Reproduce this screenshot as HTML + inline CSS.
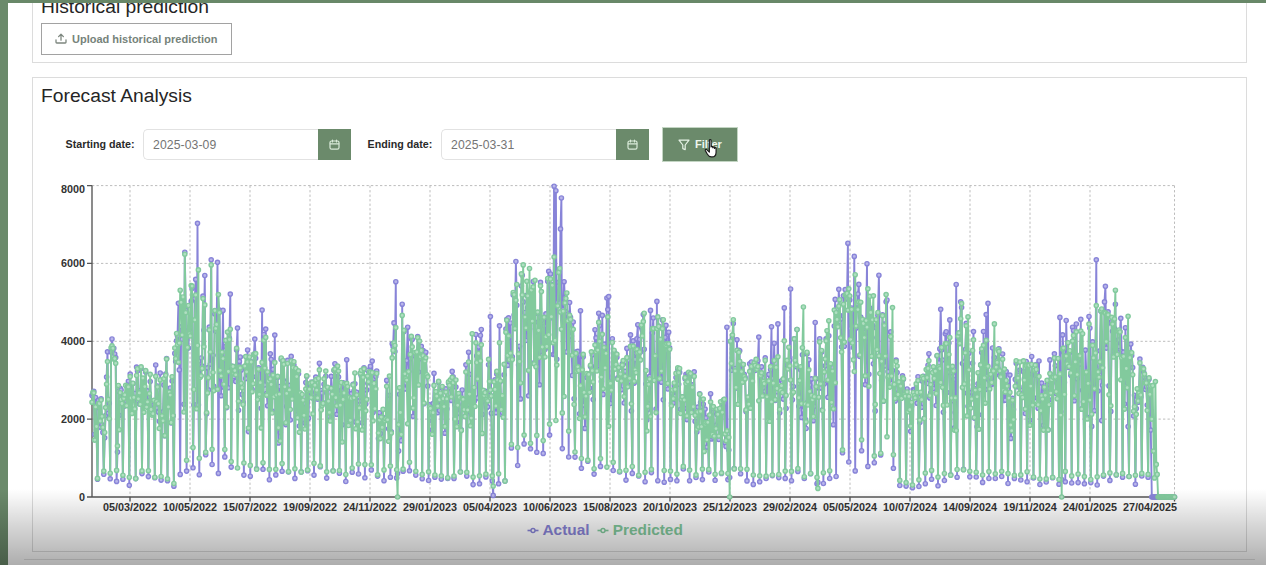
<!DOCTYPE html>
<html><head><meta charset="utf-8">
<style>
html,body{margin:0;padding:0;width:1266px;height:565px;overflow:hidden;background:#6b8a6b;font-family:"Liberation Sans",sans-serif;}
#main{position:absolute;left:8px;top:3px;width:1258px;height:562px;background:#fff;}
.abs{position:absolute;}
.card{position:absolute;border:1px solid #dcdcdc;box-sizing:border-box;background:#fff;}
.title{position:absolute;font-size:19.25px;color:#252525;white-space:nowrap;line-height:1;}
.btn-up{position:absolute;left:41px;top:23px;width:191px;height:32px;box-sizing:border-box;border:1px solid #a2a2a2;background:#fff;}
.btn-up span{position:absolute;left:30px;top:9.5px;font-size:11px;font-weight:bold;color:#76837a;white-space:nowrap;line-height:1;}
.lbl{position:absolute;font-size:10.7px;font-weight:bold;color:#2a2a2a;white-space:nowrap;line-height:1;}
.inp{position:absolute;height:31px;box-sizing:border-box;border:1px solid #e2e2e2;border-right:none;border-radius:5px 0 0 5px;background:#fff;}
.inp span{position:absolute;left:9px;top:8.6px;font-size:12.2px;color:#747474;letter-spacing:0.1px;white-space:nowrap;line-height:1;}
.cal{position:absolute;height:31px;background:#6b8a6b;}
.filter{position:absolute;left:662px;top:127px;width:76px;height:35px;box-sizing:border-box;background:#6b8a6b;border:1.5px solid #c3d5c3;}
#overlay{position:absolute;left:0;top:0;width:1266px;height:565px;pointer-events:none;
 background:linear-gradient(to bottom,rgba(0,0,0,0) 0px,rgba(0,0,0,0) 489px,rgba(0,0,0,0.045) 499px,rgba(0,0,0,0.105) 513px,rgba(0,0,0,0.18) 530px,rgba(0,0,0,0.25) 548px,rgba(0,0,0,0.32) 565px);}
</style></head><body>
<div id="wrap" style="position:absolute;left:0;top:0;width:1266px;height:565px;">
<div id="main"></div>
<!-- card 1 -->
<div class="card" style="left:32px;top:-10px;width:1215px;height:73px;"></div>
<div class="title" style="left:41px;top:-3px;">Historical prediction</div>
<div class="btn-up">
<svg class="abs" style="left:13px;top:9px" width="12" height="11" viewBox="0 0 12 11"><path d="M6 7.2V1.4M3.6 3.6L6 1.2L8.4 3.6M1 6.8V9.2Q1 10 1.8 10H10.2Q11 10 11 9.2V6.8" fill="none" stroke="#7d877f" stroke-width="1.3" stroke-linecap="round" stroke-linejoin="round"/></svg>
<span>Upload historical prediction</span></div>
<!-- card 2 -->
<div class="card" style="left:32px;top:77px;width:1215px;height:475px;"></div>
<div class="title" style="left:41px;top:86px;">Forecast Analysis</div>
<div class="lbl" style="left:65.6px;top:139.4px;">Starting date:</div>
<div class="inp" style="left:143px;top:129px;width:175px;"><span>2025-03-09</span></div>
<div class="cal" style="left:318px;top:129px;width:33px;"><svg class="abs" style="left:11px;top:10px" width="11" height="11" viewBox="0 0 11 11"><rect x="1" y="2" width="9" height="8.2" rx="1.6" fill="none" stroke="#d9ead9" stroke-width="1.2"/><path d="M1.2 4.8H9.8M3.5 1V3M7.5 1V3" stroke="#d9ead9" stroke-width="1.2" stroke-linecap="round"/></svg></div>
<div class="lbl" style="left:367.6px;top:139.4px;">Ending date:</div>
<div class="inp" style="left:441px;top:129px;width:175px;"><span>2025-03-31</span></div>
<div class="cal" style="left:616px;top:129px;width:33px;"><svg class="abs" style="left:11px;top:10px" width="11" height="11" viewBox="0 0 11 11"><rect x="1" y="2" width="9" height="8.2" rx="1.6" fill="none" stroke="#d9ead9" stroke-width="1.2"/><path d="M1.2 4.8H9.8M3.5 1V3M7.5 1V3" stroke="#d9ead9" stroke-width="1.2" stroke-linecap="round"/></svg></div>
<div class="filter"><svg class="abs" style="left:15px;top:10.5px" width="12" height="12" viewBox="0 0 12 12"><path d="M1 1.2H11L7.2 6V10.6L4.8 9.6V6Z" fill="none" stroke="#e6f2e6" stroke-width="1.2" stroke-linejoin="round"/></svg><span style="position:absolute;left:32px;top:10.5px;font-size:11px;font-weight:bold;color:#eef6ee;line-height:1;white-space:nowrap;">Filter</span>
<svg class="abs" style="left:40.5px;top:9.5px" width="17" height="21" viewBox="0 0 16 20"><path d="M5 2.2C5 1.3 6.6 1.3 6.6 2.2V8.5C6.6 7.6 8.2 7.6 8.2 8.5V9.2C8.2 8.3 9.8 8.3 9.8 9.2V9.9C9.8 9 11.4 9 11.4 9.9V13.5C11.4 16 10 18 7.6 18H6.8C5 18 3.8 16.6 3 15.2L1.2 12C0.8 11.2 1.8 10.4 2.5 11.1L5 13.4Z" fill="#fff" stroke="#1a1a1a" stroke-width="1.1" stroke-linejoin="round"/></svg></div>
<svg class="abs" style="left:0;top:0" width="1266" height="565" viewBox="0 0 1266 565">
<defs><marker id="ma" markerUnits="userSpaceOnUse" markerWidth="8" markerHeight="8" refX="4" refY="4" viewBox="0 0 8 8"><circle cx="4" cy="4" r="2.1" fill="#b9b6ea" stroke="#8884d8" stroke-width="1.4"/></marker><marker id="mp" markerUnits="userSpaceOnUse" markerWidth="8" markerHeight="8" refX="4" refY="4" viewBox="0 0 8 8"><circle cx="4" cy="4" r="2.1" fill="#b0dfc2" stroke="#82ca9d" stroke-width="1.4"/></marker></defs>
<path d="M92,185.6H1174.5M92,263.4H1174.5M92,341.3H1174.5M92,419.1H1174.5M130,185.6V497M190,185.6V497M250,185.6V497M310,185.6V497M370,185.6V497M430,185.6V497M490,185.6V497M550,185.6V497M610,185.6V497M670,185.6V497M730,185.6V497M790,185.6V497M850,185.6V497M910,185.6V497M970,185.6V497M1030,185.6V497M1090,185.6V497M1174.5,185.6V497" stroke="#bcbcbc" stroke-width="1" stroke-dasharray="2.3 2.2" fill="none"/>
<path d="M92,185.6V497M92,497H1174.5M87,497.0H92M87,419.1H92M87,341.3H92M87,263.4H92M87,185.6H92M130,497V501.5M190,497V501.5M250,497V501.5M310,497V501.5M370,497V501.5M430,497V501.5M490,497V501.5M550,497V501.5M610,497V501.5M670,497V501.5M730,497V501.5M790,497V501.5M850,497V501.5M910,497V501.5M970,497V501.5M1030,497V501.5M1090,497V501.5M1174.5,497V501.5" stroke="#555" stroke-width="1.35" fill="none"/>
<path d="M92.0,395.4L92.9,393.7L93.8,391.3L94.7,434.4L95.6,397.5L96.5,429.8L97.5,479.2L98.4,400.4L99.3,408.1L100.2,427.1L101.1,398.8L102.0,424.7L102.9,432.4L103.8,474.3L104.7,437.8L105.6,415.6L106.6,377.1L107.5,351.8L108.4,413.2L109.3,403.2L110.2,478.8L111.1,352.1L112.0,339.0L112.9,349.2L113.8,348.3L114.7,354.0L115.7,357.6L116.6,481.4L117.5,452.1L118.4,391.2L119.3,415.3L120.2,388.4L121.1,390.0L122.0,402.8L122.9,479.2L123.8,406.5L124.7,396.9L125.7,399.3L126.6,401.2L127.5,388.3L128.4,381.2L129.3,485.3L130.2,374.1L131.1,393.3L132.0,410.3L132.9,383.6L133.8,395.5L134.8,393.5L135.7,478.6L136.6,367.1L137.5,371.0L138.4,390.5L139.3,403.8L140.2,398.7L141.1,368.5L142.0,473.6L142.9,379.0L143.9,405.7L144.8,389.1L145.7,372.1L146.6,401.3L147.5,390.9L148.4,476.6L149.3,396.8L150.2,381.6L151.1,408.9L152.0,403.2L152.9,409.0L153.9,404.8L154.8,477.8L155.7,365.0L156.6,407.8L157.5,386.0L158.4,412.1L159.3,421.2L160.2,373.0L161.1,480.1L162.0,413.3L163.0,411.8L163.9,384.9L164.8,435.7L165.7,374.1L166.6,358.6L167.5,480.8L168.4,396.8L169.3,396.4L170.2,388.0L171.1,423.0L172.1,381.0L173.0,415.9L173.9,486.2L174.8,353.4L175.7,361.4L176.6,340.8L177.5,336.0L178.4,303.3L179.3,369.9L180.2,474.4L181.1,326.8L182.1,339.3L183.0,298.8L183.9,404.2L184.8,252.2L185.7,310.1L186.6,471.1L187.5,347.9L188.4,348.0L189.3,329.3L190.2,327.5L191.2,301.3L192.1,288.5L193.0,467.8L193.9,405.0L194.8,298.6L195.7,279.4L196.6,404.7L197.5,223.3L198.4,404.9L199.3,474.7L200.2,364.8L201.2,358.0L202.1,366.0L203.0,296.1L203.9,330.2L204.8,275.5L205.7,454.8L206.6,413.7L207.5,367.9L208.4,389.9L209.3,327.1L210.3,364.2L211.2,259.8L212.1,464.5L213.0,355.3L213.9,386.4L214.8,314.0L215.7,331.2L216.6,324.4L217.5,262.3L218.4,473.4L219.4,310.1L220.3,352.0L221.2,395.8L222.1,361.3L223.0,310.4L223.9,387.2L224.8,456.9L225.7,346.4L226.6,407.6L227.5,346.0L228.4,387.8L229.4,338.4L230.3,294.1L231.2,467.1L232.1,366.2L233.0,379.0L233.9,376.8L234.8,366.6L235.7,381.5L236.6,349.9L237.5,328.1L238.5,410.2L239.4,361.4L240.3,357.0L241.2,369.9L242.1,394.4L243.0,402.2L243.9,475.1L244.8,366.8L245.7,378.6L246.6,365.4L247.6,350.0L248.5,431.6L249.4,367.1L250.3,476.2L251.2,361.8L252.1,389.2L253.0,376.8L253.9,354.2L254.8,339.1L255.7,358.3L256.6,468.7L257.6,391.3L258.5,367.8L259.4,370.2L260.3,369.9L261.2,408.3L262.1,310.1L263.0,469.3L263.9,334.5L264.8,385.0L265.7,329.1L266.7,393.2L267.6,405.7L268.5,389.7L269.4,479.7L270.3,353.8L271.2,359.3L272.1,411.0L273.0,369.4L273.9,388.0L274.8,335.1L275.8,474.9L276.7,391.6L277.6,377.5L278.5,442.9L279.4,386.5L280.3,432.6L281.2,359.5L282.1,471.2L283.0,360.7L283.9,380.8L284.8,382.3L285.8,424.6L286.7,406.4L287.6,360.4L288.5,472.0L289.4,385.4L290.3,420.0L291.2,356.4L292.1,394.9L293.0,367.1L293.9,365.0L294.9,478.4L295.8,371.8L296.7,375.2L297.6,414.5L298.5,373.7L299.4,426.0L300.3,406.1L301.2,471.9L302.1,400.0L303.0,407.2L304.0,415.2L304.9,422.9L305.8,382.6L306.7,376.5L307.6,470.7L308.5,418.3L309.4,384.7L310.3,385.3L311.2,392.3L312.1,382.1L313.0,397.9L314.0,475.1L314.9,398.5L315.8,377.1L316.7,392.7L317.6,399.1L318.5,390.9L319.4,363.2L320.3,466.7L321.2,390.5L322.1,393.1L323.1,402.7L324.0,384.3L324.9,388.1L325.8,376.2L326.7,478.1L327.6,389.3L328.5,415.4L329.4,416.6L330.3,410.7L331.2,376.3L332.2,393.4L333.1,470.7L334.0,370.5L334.9,363.7L335.8,395.8L336.7,414.3L337.6,376.3L338.5,377.1L339.4,473.3L340.3,398.6L341.2,390.4L342.2,424.7L343.1,382.7L344.0,393.2L344.9,400.7L345.8,481.5L346.7,359.7L347.6,390.4L348.5,423.2L349.4,398.9L350.3,424.7L351.3,393.6L352.2,472.2L353.1,384.4L354.0,390.7L354.9,383.7L355.8,421.9L356.7,392.2L357.6,418.1L358.5,474.0L359.4,400.9L360.4,373.4L361.3,376.0L362.2,422.7L363.1,383.5L364.0,367.8L364.9,477.8L365.8,403.9L366.7,389.9L367.6,370.2L368.5,382.7L369.4,379.3L370.4,366.4L371.3,469.9L372.2,361.1L373.1,412.4L374.0,378.6L374.9,409.5L375.8,376.6L376.7,371.0L377.6,476.1L378.5,438.6L379.5,412.7L380.4,433.6L381.3,416.5L382.2,427.1L383.1,417.5L384.0,480.7L384.9,419.4L385.8,418.9L386.7,380.4L387.6,420.0L388.6,428.7L389.5,395.3L390.4,477.2L391.3,431.8L392.2,343.7L393.1,346.5L394.0,322.9L394.9,351.6L395.8,281.7L396.7,477.9L397.6,473.6L398.6,450.9L399.5,394.3L400.4,422.2L401.3,440.7L402.2,304.2L403.1,471.2L404.0,331.4L404.9,388.9L405.8,383.0L406.7,360.6L407.7,327.2L408.6,371.6L409.5,470.8L410.4,358.7L411.3,338.6L412.2,339.5L413.1,416.3L414.0,407.4L414.9,356.0L415.8,475.1L416.8,363.4L417.7,336.5L418.6,372.0L419.5,348.0L420.4,358.6L421.3,346.3L422.2,478.7L423.1,350.6L424.0,403.7L424.9,353.9L425.8,352.2L426.8,375.6L427.7,386.1L428.6,480.5L429.5,404.8L430.4,419.9L431.3,417.9L432.2,429.7L433.1,403.6L434.0,373.3L434.9,477.2L435.9,396.6L436.8,392.5L437.7,412.6L438.6,382.3L439.5,410.5L440.4,400.6L441.3,479.1L442.2,388.2L443.1,401.0L444.0,406.3L444.9,433.2L445.9,388.9L446.8,408.9L447.7,478.5L448.6,382.9L449.5,384.4L450.4,387.9L451.3,400.4L452.2,371.4L453.1,376.9L454.0,478.4L455.0,404.8L455.9,387.1L456.8,422.3L457.7,413.3L458.6,395.8L459.5,397.0L460.4,471.7L461.3,429.9L462.2,390.0L463.1,404.6L464.1,404.1L465.0,416.4L465.9,364.8L466.8,476.1L467.7,404.8L468.6,352.2L469.5,374.2L470.4,412.3L471.3,415.2L472.2,401.2L473.1,484.6L474.1,401.8L475.0,399.7L475.9,334.5L476.8,355.9L477.7,397.9L478.6,347.0L479.5,483.8L480.4,335.5L481.3,329.5L482.2,414.4L483.2,400.8L484.1,398.9L485.0,391.1L485.9,476.9L486.8,407.4L487.7,406.8L488.6,364.8L489.5,391.2L490.4,316.6L491.3,413.3L492.3,480.9L493.2,495.4L494.1,395.9L495.0,379.9L495.9,412.8L496.8,374.1L497.7,390.1L498.6,483.8L499.5,325.8L500.4,381.6L501.3,414.3L502.3,412.5L503.2,402.2L504.1,374.8L505.0,480.9L505.9,329.1L506.8,319.3L507.7,365.4L508.6,317.8L509.5,361.0L510.4,323.0L511.4,447.9L512.3,356.7L513.2,295.0L514.1,315.1L515.0,313.4L515.9,261.5L516.8,305.2L517.7,465.5L518.6,365.0L519.5,346.2L520.5,398.9L521.4,286.0L522.3,275.2L523.2,301.9L524.1,443.9L525.0,312.5L525.9,340.5L526.8,295.2L527.7,307.7L528.6,395.8L529.5,329.0L530.5,448.8L531.4,301.6L532.3,313.8L533.2,281.5L534.1,362.9L535.0,322.1L535.9,363.3L536.8,452.3L537.7,313.3L538.6,332.9L539.6,384.8L540.5,282.3L541.4,320.7L542.3,355.3L543.2,453.4L544.1,326.0L545.0,349.5L545.9,313.9L546.8,346.7L547.7,281.3L548.7,271.3L549.6,435.1L550.5,274.0L551.4,317.8L552.3,284.9L553.2,354.5L554.1,186.2L555.0,354.6L555.9,190.7L556.8,359.3L557.7,302.5L558.7,282.3L559.6,303.2L560.5,228.9L561.4,198.0L562.3,448.6L563.2,309.6L564.1,281.7L565.0,301.8L565.9,311.9L566.8,351.9L567.8,314.0L568.7,457.0L569.6,302.5L570.5,317.4L571.4,336.1L572.3,375.5L573.2,322.0L574.1,398.8L575.0,457.1L575.9,352.1L576.9,367.4L577.8,351.4L578.7,367.4L579.6,413.7L580.5,310.7L581.4,468.3L582.3,387.7L583.2,356.8L584.1,405.1L585.0,428.4L585.9,399.5L586.9,377.4L587.8,461.2L588.7,374.0L589.6,388.1L590.5,366.6L591.4,366.2L592.3,354.8L593.2,399.6L594.1,474.1L595.0,329.7L596.0,337.9L596.9,369.5L597.8,369.8L598.7,313.2L599.6,325.6L600.5,466.4L601.4,381.6L602.3,315.4L603.2,394.4L604.1,344.1L605.1,363.3L606.0,360.9L606.9,298.0L607.8,309.6L608.7,296.6L609.6,394.2L610.5,403.5L611.4,387.3L612.3,338.7L613.2,470.5L614.1,352.1L615.1,366.6L616.0,354.1L616.9,357.3L617.8,377.8L618.7,367.9L619.6,472.0L620.5,375.6L621.4,389.7L622.3,363.8L623.2,364.3L624.2,403.0L625.1,371.3L626.0,480.1L626.9,348.4L627.8,384.8L628.7,360.1L629.6,381.3L630.5,334.9L631.4,410.9L632.3,473.4L633.2,340.9L634.2,383.1L635.1,359.5L636.0,353.2L636.9,338.9L637.8,324.7L638.7,475.9L639.6,339.5L640.5,352.1L641.4,327.5L642.3,330.1L643.3,314.6L644.2,349.2L645.1,481.7L646.0,384.0L646.9,420.0L647.8,409.4L648.7,403.8L649.6,376.4L650.5,310.4L651.4,472.6L652.4,333.0L653.3,318.0L654.2,360.5L655.1,355.7L656.0,409.1L656.9,301.4L657.8,480.7L658.7,326.1L659.6,379.2L660.5,360.7L661.4,382.2L662.4,319.9L663.3,399.8L664.2,482.2L665.1,337.4L666.0,325.4L666.9,350.3L667.8,389.0L668.7,332.2L669.6,347.9L670.5,479.4L671.5,403.3L672.4,393.4L673.3,403.1L674.2,385.7L675.1,396.2L676.0,377.5L676.9,480.8L677.8,369.2L678.7,384.2L679.6,372.4L680.6,409.2L681.5,399.7L682.4,396.8L683.3,469.0L684.2,408.4L685.1,378.7L686.0,374.2L686.9,419.6L687.8,374.4L688.7,373.7L689.6,480.7L690.6,375.6L691.5,410.9L692.4,384.9L693.3,403.6L694.2,371.8L695.1,421.3L696.0,477.5L696.9,432.0L697.8,407.1L698.7,427.4L699.7,393.7L700.6,402.5L701.5,406.4L702.4,479.6L703.3,404.2L704.2,447.7L705.1,409.1L706.0,417.8L706.9,447.1L707.8,428.8L708.8,472.0L709.7,424.0L710.6,393.7L711.5,438.9L712.4,437.0L713.3,412.2L714.2,434.4L715.1,480.3L716.0,425.3L716.9,414.5L717.8,410.0L718.8,439.5L719.7,410.8L720.6,413.5L721.5,473.4L722.4,410.0L723.3,406.4L724.2,399.5L725.1,443.0L726.0,446.4L726.9,327.2L727.9,479.6L728.8,450.1L729.7,477.5L730.6,341.5L731.5,370.3L732.4,337.9L733.3,323.5L734.2,468.5L735.1,368.5L736.0,388.1L737.0,339.7L737.9,383.9L738.8,350.3L739.7,350.7L740.6,473.7L741.5,364.2L742.4,373.0L743.3,364.6L744.2,374.3L745.1,377.4L746.0,411.4L747.0,480.9L747.9,402.2L748.8,401.3L749.7,363.8L750.6,402.8L751.5,362.0L752.4,382.6L753.3,484.4L754.2,367.3L755.1,370.5L756.1,361.4L757.0,362.4L757.9,360.7L758.8,337.1L759.7,481.8L760.6,376.5L761.5,366.8L762.4,394.3L763.3,387.8L764.2,377.9L765.2,357.9L766.1,478.5L767.0,381.7L767.9,415.6L768.8,374.4L769.7,406.6L770.6,369.6L771.5,326.7L772.4,475.6L773.3,378.4L774.2,343.2L775.2,400.5L776.1,376.2L777.0,391.8L777.9,323.9L778.8,477.6L779.7,412.8L780.6,387.1L781.5,380.7L782.4,382.8L783.3,399.1L784.3,307.9L785.2,478.4L786.1,408.5L787.0,368.0L787.9,364.5L788.8,362.7L789.7,360.3L790.6,289.0L791.5,480.7L792.4,399.7L793.4,386.5L794.3,338.8L795.2,357.5L796.1,366.6L797.0,329.6L797.9,471.4L798.8,406.3L799.7,387.2L800.6,369.8L801.5,417.4L802.4,354.8L803.4,410.3L804.3,478.5L805.2,419.3L806.1,428.5L807.0,354.0L807.9,402.0L808.8,359.8L809.7,385.1L810.6,473.8L811.5,378.9L812.5,402.7L813.4,420.7L814.3,406.3L815.2,322.5L816.1,378.8L817.0,483.7L817.9,482.2L818.8,387.9L819.7,338.7L820.6,387.9L821.6,352.1L822.5,409.8L823.4,483.5L824.3,383.8L825.2,365.8L826.1,338.9L827.0,338.8L827.9,397.3L828.8,335.7L829.7,478.5L830.6,373.2L831.6,406.0L832.5,367.7L833.4,424.7L834.3,326.1L835.2,299.4L836.1,476.5L837.0,308.7L837.9,325.1L838.8,289.3L839.7,315.2L840.7,319.1L841.6,347.0L842.5,452.8L843.4,295.8L844.3,346.3L845.2,289.6L846.1,298.9L847.0,298.4L847.9,243.2L848.8,462.0L849.8,300.1L850.7,328.6L851.6,308.0L852.5,341.2L853.4,347.6L854.3,256.4L855.2,470.9L856.1,328.1L857.0,304.1L857.9,294.0L858.8,284.4L859.8,356.5L860.7,317.1L861.6,450.7L862.5,325.9L863.4,329.6L864.3,332.4L865.2,384.6L866.1,325.1L867.0,263.7L867.9,466.4L868.9,374.2L869.8,308.0L870.7,318.0L871.6,338.4L872.5,325.4L873.4,363.7L874.3,462.7L875.2,410.9L876.1,327.8L877.0,337.5L877.9,315.4L878.9,275.2L879.8,356.4L880.7,454.9L881.6,380.4L882.5,314.9L883.4,401.2L884.3,324.1L885.2,365.9L886.1,301.7L887.0,300.0L888.0,371.6L888.9,377.6L889.8,380.0L890.7,331.9L891.6,374.8L892.5,370.2L893.4,468.3L894.3,384.4L895.2,400.9L896.1,360.1L897.1,372.6L898.0,398.2L898.9,392.1L899.8,485.5L900.7,392.6L901.6,392.7L902.5,375.9L903.4,379.2L904.3,390.4L905.2,395.7L906.1,486.1L907.1,389.0L908.0,404.7L908.9,397.8L909.8,410.4L910.7,431.3L911.6,406.2L912.5,487.7L913.4,389.6L914.3,389.8L915.2,396.3L916.2,388.2L917.1,403.2L918.0,376.7L918.9,486.5L919.8,422.5L920.7,393.8L921.6,407.3L922.5,381.2L923.4,376.3L924.3,418.3L925.3,483.7L926.2,377.1L927.1,383.5L928.0,365.2L928.9,353.7L929.8,397.9L930.7,393.1L931.6,479.2L932.5,386.1L933.4,388.5L934.3,368.7L935.3,370.4L936.2,405.5L937.1,356.0L938.0,485.8L938.9,362.9L939.8,348.9L940.7,309.3L941.6,350.1L942.5,360.0L943.4,412.2L944.4,480.5L945.3,333.7L946.2,331.7L947.1,392.5L948.0,372.2L948.9,343.1L949.8,319.9L950.7,474.8L951.6,400.8L952.5,373.0L953.5,379.5L954.4,427.9L955.3,412.6L956.2,284.5L957.1,477.2L958.0,342.2L958.9,333.2L959.8,343.6L960.7,301.8L961.6,307.5L962.5,363.6L963.5,469.4L964.4,362.0L965.3,349.5L966.2,323.3L967.1,393.1L968.0,406.2L968.9,353.3L969.8,476.8L970.7,397.0L971.6,392.3L972.6,363.2L973.5,331.6L974.4,418.1L975.3,388.8L976.2,477.0L977.1,426.7L978.0,383.8L978.9,414.7L979.8,382.0L980.7,364.9L981.7,352.6L982.6,482.4L983.5,331.5L984.4,379.7L985.3,389.4L986.2,314.6L987.1,376.2L988.0,303.3L988.9,478.5L989.8,381.1L990.7,382.4L991.7,384.4L992.6,348.0L993.5,383.2L994.4,357.6L995.3,478.5L996.2,374.1L997.1,372.6L998.0,368.7L998.9,348.7L999.8,375.6L1000.8,372.2L1001.7,476.5L1002.6,354.0L1003.5,400.4L1004.4,384.6L1005.3,400.2L1006.2,371.5L1007.1,384.9L1008.0,483.5L1008.9,405.3L1009.9,375.1L1010.8,438.4L1011.7,423.4L1012.6,398.3L1013.5,409.4L1014.4,478.4L1015.3,379.4L1016.2,363.3L1017.1,386.7L1018.0,375.2L1018.9,386.5L1019.9,370.1L1020.8,480.0L1021.7,390.2L1022.6,393.9L1023.5,371.7L1024.4,378.9L1025.3,413.5L1026.2,361.5L1027.1,481.8L1028.0,375.1L1029.0,374.0L1029.9,420.3L1030.8,400.4L1031.7,356.5L1032.6,399.3L1033.5,478.0L1034.4,370.7L1035.3,375.2L1036.2,364.5L1037.1,397.9L1038.1,408.2L1039.0,361.0L1039.9,484.5L1040.8,405.6L1041.7,383.1L1042.6,411.6L1043.5,425.4L1044.4,388.9L1045.3,397.0L1046.2,482.0L1047.1,384.7L1048.1,429.8L1049.0,399.7L1049.9,359.9L1050.8,391.0L1051.7,382.3L1052.6,477.8L1053.5,375.0L1054.4,353.8L1055.3,365.7L1056.2,393.5L1057.2,383.5L1058.1,382.6L1059.0,484.2L1059.9,317.4L1060.8,411.8L1061.7,479.5L1062.6,334.9L1063.5,352.2L1064.4,382.4L1065.3,481.8L1066.2,320.5L1067.2,361.6L1068.1,352.8L1069.0,367.4L1069.9,352.3L1070.8,375.2L1071.7,483.0L1072.6,327.2L1073.5,330.6L1074.4,400.8L1075.3,361.3L1076.3,324.0L1077.2,378.8L1078.1,482.6L1079.0,358.8L1079.9,364.1L1080.8,319.3L1081.7,408.9L1082.6,390.3L1083.5,402.1L1084.4,483.8L1085.4,350.1L1086.3,373.3L1087.2,417.4L1088.1,391.2L1089.0,316.5L1089.9,328.1L1090.8,482.6L1091.7,426.4L1092.6,341.8L1093.5,358.3L1094.4,410.7L1095.4,366.4L1096.3,259.8L1097.2,485.0L1098.1,391.0L1099.0,371.4L1099.9,350.8L1100.8,311.1L1101.7,420.6L1102.6,385.3L1103.5,476.1L1104.5,301.9L1105.4,286.3L1106.3,348.1L1107.2,324.3L1108.1,311.8L1109.0,385.9L1109.9,480.4L1110.8,411.4L1111.7,321.3L1112.6,331.2L1113.6,354.7L1114.5,328.5L1115.4,304.2L1116.3,474.9L1117.2,351.9L1118.1,340.0L1119.0,346.7L1119.9,331.5L1120.8,318.3L1121.7,351.5L1122.6,477.2L1123.6,352.2L1124.5,404.0L1125.4,327.7L1126.3,361.7L1127.2,382.8L1128.1,426.6L1129.0,476.5L1129.9,358.1L1130.8,344.1L1131.7,355.6L1132.7,367.6L1133.6,416.0L1134.5,395.2L1135.4,484.2L1136.3,408.6L1137.2,396.4L1138.1,402.3L1139.0,393.0L1139.9,359.1L1140.8,397.1L1141.8,476.0L1142.7,367.4L1143.6,371.8L1144.5,377.3L1145.4,389.5L1146.3,386.6L1147.2,405.1L1148.1,477.3L1149.0,379.3L1149.9,392.2L1150.8,430.1L1151.8,497.0L1152.7,497.0L1153.6,497.0L1154.5,497.0L1155.4,497.0L1156.3,497.0L1157.2,497.0L1158.1,497.0L1159.0,497.0L1159.9,497.0L1160.9,497.0L1161.8,497.0L1162.7,497.0L1163.6,497.0L1164.5,497.0L1165.4,497.0L1166.3,497.0L1167.2,497.0L1168.1,497.0L1169.0,497.0L1170.0,497.0L1170.9,497.0L1171.8,497.0L1172.7,497.0L1173.6,497.0L1174.5,497.0" fill="none" stroke="#8884d8" stroke-width="1.9" stroke-linejoin="round" marker-start="url(#ma)" marker-mid="url(#ma)" marker-end="url(#ma)"/>
<path d="M92.0,402.2L92.9,392.4L93.8,392.8L94.7,440.1L95.6,406.9L96.5,426.5L97.5,478.4L98.4,403.5L99.3,403.5L100.2,421.0L101.1,400.0L102.0,416.3L102.9,427.4L103.8,471.1L104.7,432.5L105.6,407.6L106.6,384.2L107.5,361.6L108.4,399.4L109.3,418.7L110.2,473.2L111.1,347.7L112.0,345.8L112.9,348.3L113.8,359.1L114.7,358.6L115.7,363.3L116.6,470.4L117.5,445.9L118.4,385.5L119.3,429.7L120.2,392.7L121.1,399.5L122.0,403.5L122.9,475.2L123.8,398.4L124.7,394.9L125.7,385.4L126.6,405.7L127.5,386.4L128.4,386.9L129.3,477.3L130.2,376.6L131.1,398.0L132.0,413.4L132.9,383.2L133.8,397.4L134.8,408.9L135.7,478.6L136.6,375.5L137.5,368.7L138.4,398.8L139.3,392.9L140.2,404.3L141.1,366.9L142.0,470.9L142.9,378.1L143.9,412.3L144.8,386.6L145.7,370.6L146.6,407.1L147.5,401.9L148.4,470.7L149.3,393.6L150.2,374.3L151.1,409.5L152.0,415.1L152.9,413.7L153.9,400.3L154.8,477.3L155.7,376.3L156.6,401.6L157.5,387.0L158.4,403.7L159.3,428.5L160.2,379.9L161.1,476.5L162.0,415.8L163.0,420.8L163.9,378.7L164.8,435.6L165.7,375.3L166.6,359.1L167.5,478.8L168.4,406.9L169.3,392.1L170.2,395.1L171.1,422.5L172.1,376.7L173.0,415.6L173.9,483.5L174.8,348.0L175.7,358.6L176.6,333.5L177.5,344.7L178.4,362.2L179.3,343.1L180.2,290.2L181.1,302.3L182.1,335.0L183.0,297.0L183.9,412.0L184.8,254.2L185.7,312.7L186.6,460.3L187.5,347.4L188.4,305.5L189.3,333.9L190.2,335.9L191.2,285.5L192.1,286.1L193.0,447.6L193.9,389.5L194.8,319.9L195.7,295.0L196.6,408.8L197.5,345.5L198.4,269.9L199.3,458.2L200.2,377.2L201.2,375.8L202.1,368.4L203.0,298.6L203.9,346.8L204.8,304.9L205.7,452.2L206.6,412.6L207.5,392.9L208.4,377.7L209.3,329.9L210.3,352.0L211.2,264.9L212.1,449.3L213.0,372.5L213.9,390.6L214.8,310.6L215.7,328.4L216.6,324.5L217.5,389.2L218.4,294.6L219.4,312.6L220.3,370.3L221.2,375.9L222.1,352.2L223.0,358.6L223.9,384.2L224.8,449.5L225.7,340.3L226.6,407.0L227.5,332.1L228.4,371.5L229.4,339.6L230.3,329.2L231.2,461.6L232.1,366.2L233.0,366.5L233.9,373.6L234.8,370.6L235.7,374.8L236.6,348.2L237.5,468.0L238.5,401.2L239.4,367.0L240.3,367.9L241.2,383.3L242.1,387.7L243.0,404.5L243.9,463.0L244.8,366.1L245.7,356.6L246.6,371.8L247.6,361.9L248.5,428.1L249.4,357.0L250.3,465.4L251.2,362.0L252.1,391.7L253.0,383.7L253.9,354.4L254.8,354.2L255.7,353.6L256.6,469.3L257.6,399.6L258.5,369.2L259.4,394.3L260.3,382.7L261.2,427.9L262.1,362.4L263.0,462.7L263.9,340.2L264.8,368.1L265.7,337.4L266.7,395.2L267.6,372.0L268.5,381.0L269.4,469.4L270.3,378.9L271.2,384.5L272.1,413.0L273.0,375.1L273.9,396.8L274.8,362.6L275.8,469.3L276.7,394.9L277.6,376.4L278.5,427.7L279.4,394.2L280.3,441.0L281.2,358.0L282.1,463.6L283.0,360.7L283.9,364.3L284.8,386.8L285.8,422.7L286.7,393.4L287.6,363.5L288.5,471.6L289.4,389.9L290.3,409.5L291.2,361.0L292.1,399.0L293.0,367.6L293.9,361.7L294.9,468.8L295.8,368.5L296.7,376.6L297.6,417.7L298.5,370.9L299.4,432.2L300.3,392.8L301.2,472.1L302.1,394.5L303.0,400.2L304.0,415.3L304.9,429.0L305.8,389.1L306.7,375.8L307.6,469.9L308.5,390.4L309.4,389.2L310.3,383.2L311.2,397.6L312.1,382.6L313.0,413.9L314.0,463.2L314.9,385.2L315.8,379.8L316.7,390.2L317.6,397.9L318.5,378.5L319.4,369.9L320.3,465.9L321.2,410.0L322.1,405.4L323.1,403.4L324.0,378.8L324.9,388.9L325.8,371.1L326.7,471.8L327.6,387.2L328.5,401.2L329.4,412.4L330.3,420.9L331.2,388.3L332.2,394.2L333.1,471.0L334.0,370.1L334.9,369.1L335.8,397.7L336.7,405.8L337.6,366.1L338.5,371.1L339.4,470.5L340.3,405.2L341.2,382.5L342.2,442.0L343.1,399.5L344.0,393.0L344.9,384.1L345.8,474.5L346.7,383.3L347.6,386.6L348.5,425.5L349.4,397.4L350.3,420.3L351.3,398.4L352.2,468.0L353.1,385.0L354.0,397.8L354.9,373.0L355.8,428.7L356.7,395.0L357.6,421.9L358.5,464.0L359.4,407.9L360.4,373.2L361.3,370.3L362.2,429.9L363.1,377.3L364.0,368.8L364.9,464.6L365.8,410.8L366.7,399.4L367.6,376.1L368.5,381.7L369.4,371.8L370.4,372.2L371.3,464.8L372.2,372.6L373.1,420.8L374.0,383.5L374.9,408.7L375.8,388.9L376.7,373.5L377.6,474.8L378.5,433.0L379.5,420.1L380.4,438.6L381.3,417.1L382.2,427.4L383.1,409.4L384.0,469.9L384.9,420.8L385.8,418.8L386.7,386.3L387.6,419.8L388.6,441.3L389.5,376.1L390.4,466.1L391.3,432.9L392.2,357.9L393.1,350.4L394.0,342.8L394.9,345.5L395.8,327.6L396.7,469.7L397.6,497.0L398.6,424.6L399.5,387.7L400.4,412.5L401.3,434.5L402.2,315.4L403.1,469.1L404.0,330.4L404.9,373.8L405.8,378.6L406.7,380.1L407.7,423.7L408.6,371.6L409.5,462.2L410.4,354.5L411.3,336.4L412.2,346.8L413.1,408.1L414.0,397.8L414.9,352.5L415.8,471.2L416.8,352.0L417.7,337.7L418.6,384.9L419.5,341.1L420.4,356.8L421.3,350.5L422.2,474.4L423.1,355.7L424.0,403.1L424.9,360.9L425.8,357.8L426.8,374.7L427.7,376.8L428.6,471.8L429.5,407.0L430.4,408.5L431.3,412.5L432.2,434.3L433.1,412.7L434.0,385.4L434.9,475.0L435.9,391.6L436.8,396.2L437.7,406.2L438.6,381.4L439.5,399.8L440.4,393.2L441.3,475.8L442.2,386.5L443.1,398.7L444.0,406.6L444.9,426.4L445.9,392.1L446.8,398.9L447.7,477.7L448.6,381.9L449.5,385.4L450.4,379.9L451.3,396.8L452.2,377.4L453.1,382.7L454.0,476.0L455.0,419.1L455.9,380.0L456.8,426.7L457.7,405.3L458.6,393.5L459.5,397.3L460.4,472.0L461.3,430.4L462.2,398.2L463.1,399.3L464.1,409.6L465.0,416.4L465.9,372.0L466.8,472.3L467.7,410.0L468.6,362.0L469.5,394.1L470.4,425.8L471.3,418.1L472.2,333.7L473.1,477.1L474.1,387.5L475.0,406.5L475.9,342.8L476.8,362.6L477.7,378.9L478.6,353.4L479.5,475.8L480.4,360.9L481.3,344.8L482.2,433.4L483.2,390.3L484.1,395.4L485.0,392.7L485.9,474.1L486.8,399.4L487.7,400.9L488.6,359.3L489.5,381.4L490.4,390.0L491.3,396.0L492.3,475.9L493.2,486.1L494.1,381.8L495.0,389.4L495.9,406.0L496.8,371.4L497.7,379.9L498.6,473.8L499.5,342.7L500.4,381.0L501.3,409.5L502.3,395.7L503.2,417.2L504.1,364.3L505.0,481.1L505.9,332.2L506.8,320.2L507.7,355.4L508.6,335.9L509.5,359.7L510.4,353.2L511.4,444.2L512.3,359.6L513.2,292.5L514.1,294.6L515.0,328.6L515.9,300.3L516.8,284.5L517.7,447.5L518.6,353.9L519.5,361.5L520.5,383.0L521.4,273.9L522.3,294.9L523.2,264.9L524.1,435.1L525.0,317.1L525.9,327.9L526.8,281.3L527.7,295.8L528.6,370.4L529.5,268.5L530.5,443.3L531.4,290.0L532.3,321.2L533.2,286.9L534.1,363.8L535.0,280.3L535.9,366.7L536.8,435.4L537.7,312.1L538.6,330.5L539.6,357.3L540.5,285.8L541.4,291.6L542.3,347.0L543.2,440.6L544.1,317.3L545.0,357.0L545.9,336.8L546.8,346.5L547.7,278.5L548.7,334.7L549.6,424.1L550.5,279.0L551.4,316.7L552.3,285.3L553.2,342.8L554.1,257.0L555.0,340.4L555.9,420.5L556.8,365.1L557.7,305.8L558.7,272.4L559.6,268.5L560.5,311.9L561.4,329.2L562.3,412.9L563.2,311.2L564.1,396.5L565.0,302.9L565.9,298.5L566.8,293.0L567.8,320.8L568.7,431.1L569.6,315.2L570.5,319.4L571.4,329.0L572.3,355.3L573.2,329.3L574.1,404.5L575.0,452.0L575.9,353.4L576.9,371.3L577.8,366.8L578.7,370.5L579.6,418.5L580.5,385.7L581.4,458.5L582.3,369.8L583.2,354.4L584.1,392.4L585.0,416.8L585.9,396.2L586.9,373.5L587.8,460.1L588.7,374.4L589.6,392.3L590.5,365.2L591.4,351.8L592.3,370.7L593.2,381.9L594.1,468.7L595.0,345.0L596.0,351.7L596.9,371.0L597.8,350.1L598.7,322.4L599.6,341.3L600.5,458.6L601.4,377.1L602.3,334.3L603.2,388.8L604.1,347.6L605.1,367.9L606.0,353.4L606.9,467.1L607.8,316.9L608.7,426.2L609.6,382.4L610.5,383.4L611.4,390.2L612.3,342.5L613.2,462.3L614.1,350.3L615.1,369.1L616.0,364.4L616.9,354.2L617.8,379.2L618.7,367.6L619.6,471.3L620.5,374.0L621.4,381.0L622.3,365.0L623.2,360.6L624.2,396.6L625.1,376.3L626.0,470.2L626.9,357.6L627.8,386.8L628.7,379.0L629.6,378.3L630.5,346.4L631.4,403.8L632.3,466.5L633.2,346.1L634.2,381.3L635.1,369.8L636.0,372.7L636.9,349.5L637.8,352.8L638.7,475.2L639.6,352.0L640.5,359.9L641.4,325.1L642.3,335.9L643.3,321.6L644.2,313.2L645.1,472.2L646.0,370.5L646.9,431.0L647.8,406.4L648.7,384.3L649.6,379.0L650.5,416.6L651.4,469.4L652.4,328.9L653.3,328.6L654.2,380.5L655.1,355.8L656.0,412.6L656.9,328.6L657.8,316.9L658.7,326.5L659.6,378.6L660.5,339.3L661.4,371.1L662.4,328.7L663.3,319.7L664.2,470.5L665.1,344.5L666.0,345.5L666.9,343.8L667.8,383.4L668.7,343.8L669.6,349.3L670.5,471.1L671.5,405.8L672.4,390.0L673.3,398.7L674.2,383.0L675.1,389.4L676.0,373.4L676.9,474.1L677.8,367.8L678.7,372.7L679.6,368.5L680.6,413.5L681.5,399.3L682.4,396.8L683.3,466.4L684.2,400.0L685.1,377.6L686.0,383.5L686.9,415.9L687.8,381.8L688.7,372.2L689.6,470.1L690.6,373.6L691.5,412.5L692.4,387.4L693.3,406.7L694.2,376.4L695.1,415.3L696.0,474.9L696.9,429.1L697.8,412.0L698.7,426.9L699.7,394.2L700.6,411.4L701.5,426.7L702.4,469.1L703.3,399.1L704.2,451.4L705.1,424.0L706.0,422.3L706.9,439.8L707.8,422.3L708.8,469.4L709.7,415.0L710.6,402.1L711.5,435.4L712.4,434.4L713.3,406.6L714.2,436.2L715.1,474.2L716.0,428.6L716.9,409.2L717.8,414.3L718.8,436.1L719.7,408.5L720.6,401.7L721.5,472.9L722.4,412.3L723.3,400.3L724.2,399.4L725.1,433.9L726.0,440.7L726.9,430.9L727.9,473.5L728.8,437.4L729.7,497.0L730.6,341.2L731.5,363.6L732.4,335.1L733.3,319.7L734.2,468.9L735.1,371.0L736.0,387.3L737.0,350.4L737.9,404.3L738.8,352.4L739.7,361.3L740.6,468.7L741.5,371.6L742.4,382.2L743.3,364.5L744.2,376.6L745.1,378.9L746.0,409.9L747.0,469.2L747.9,397.1L748.8,404.2L749.7,371.4L750.6,408.2L751.5,366.4L752.4,380.9L753.3,475.0L754.2,362.9L755.1,365.3L756.1,359.4L757.0,369.2L757.9,366.6L758.8,400.7L759.7,475.8L760.6,375.4L761.5,372.8L762.4,395.9L763.3,381.5L764.2,383.7L765.2,360.4L766.1,476.1L767.0,396.8L767.9,421.0L768.8,380.9L769.7,421.3L770.6,366.6L771.5,401.9L772.4,475.0L773.3,383.2L774.2,360.6L775.2,399.6L776.1,367.4L777.0,388.5L777.9,356.8L778.8,474.5L779.7,409.4L780.6,390.5L781.5,385.7L782.4,392.5L783.3,378.9L784.3,340.8L785.2,471.1L786.1,395.4L787.0,360.4L787.9,369.0L788.8,347.2L789.7,365.9L790.6,380.0L791.5,471.4L792.4,393.2L793.4,392.2L794.3,338.9L795.2,360.3L796.1,364.8L797.0,329.5L797.9,468.6L798.8,397.7L799.7,380.6L800.6,366.7L801.5,403.6L802.4,347.7L803.4,307.0L804.3,476.7L805.2,404.0L806.1,421.9L807.0,352.2L807.9,405.0L808.8,369.9L809.7,391.4L810.6,473.5L811.5,395.5L812.5,399.8L813.4,416.5L814.3,396.7L815.2,378.3L816.1,386.6L817.0,477.4L817.9,488.4L818.8,397.2L819.7,341.9L820.6,383.8L821.6,350.5L822.5,410.5L823.4,472.7L824.3,371.9L825.2,359.0L826.1,340.9L827.0,330.7L827.9,380.0L828.8,320.7L829.7,470.7L830.6,363.7L831.6,402.3L832.5,371.2L833.4,408.8L834.3,310.1L835.2,382.7L836.1,312.7L837.0,319.4L837.9,326.8L838.8,306.2L839.7,299.7L840.7,337.8L841.6,352.0L842.5,449.9L843.4,304.2L844.3,342.1L845.2,294.9L846.1,294.2L847.0,293.5L847.9,310.1L848.8,288.8L849.8,296.0L850.7,339.6L851.6,309.5L852.5,343.0L853.4,359.8L854.3,371.5L855.2,274.7L856.1,326.1L857.0,310.1L857.9,309.6L858.8,302.0L859.8,355.0L860.7,302.2L861.6,439.8L862.5,319.3L863.4,323.5L864.3,337.6L865.2,375.9L866.1,320.6L867.0,327.2L867.9,288.8L868.9,386.2L869.8,296.3L870.7,312.5L871.6,356.2L872.5,319.8L873.4,295.8L874.3,455.9L875.2,404.4L876.1,319.7L877.0,349.6L877.9,312.5L878.9,355.9L879.8,373.5L880.7,453.2L881.6,361.3L882.5,315.7L883.4,400.9L884.3,325.6L885.2,356.1L886.1,294.6L887.0,436.8L888.0,377.3L888.9,376.2L889.8,387.1L890.7,336.6L891.6,376.0L892.5,307.6L893.4,454.7L894.3,384.4L895.2,398.5L896.1,361.5L897.1,366.0L898.0,394.5L898.9,381.9L899.8,480.4L900.7,386.2L901.6,398.3L902.5,377.8L903.4,378.7L904.3,394.8L905.2,396.2L906.1,482.6L907.1,392.0L908.0,411.8L908.9,396.4L909.8,409.7L910.7,426.1L911.6,402.3L912.5,485.0L913.4,392.5L914.3,395.7L915.2,397.9L916.2,383.9L917.1,392.5L918.0,380.6L918.9,479.8L919.8,420.2L920.7,392.2L921.6,399.7L922.5,376.6L923.4,378.5L924.3,418.5L925.3,473.1L926.2,369.6L927.1,377.6L928.0,368.4L928.9,360.7L929.8,395.6L930.7,384.6L931.6,470.4L932.5,372.6L933.4,366.7L934.3,378.4L935.3,371.2L936.2,393.4L937.1,355.6L938.0,477.1L938.9,366.8L939.8,368.6L940.7,382.5L941.6,347.5L942.5,387.3L943.4,405.4L944.4,473.5L945.3,344.0L946.2,343.6L947.1,405.0L948.0,366.8L948.9,354.5L949.8,337.5L950.7,475.2L951.6,398.0L952.5,366.4L953.5,371.0L954.4,430.1L955.3,397.9L956.2,430.6L957.1,469.5L958.0,336.2L958.9,332.9L959.8,343.3L960.7,318.7L961.6,303.6L962.5,387.4L963.5,469.7L964.4,383.9L965.3,352.9L966.2,325.8L967.1,415.9L968.0,316.9L968.9,369.8L969.8,471.2L970.7,408.1L971.6,398.9L972.6,350.5L973.5,339.8L974.4,417.5L975.3,390.1L976.2,472.2L977.1,396.8L978.0,372.7L978.9,429.2L979.8,389.5L980.7,364.9L981.7,348.9L982.6,475.0L983.5,345.3L984.4,377.8L985.3,403.1L986.2,340.3L987.1,366.2L988.0,366.3L988.9,471.6L989.8,388.9L990.7,374.3L991.7,382.5L992.6,370.3L993.5,371.0L994.4,323.9L995.3,473.8L996.2,367.2L997.1,362.4L998.0,349.7L998.9,351.4L999.8,370.8L1000.8,376.9L1001.7,471.3L1002.6,359.2L1003.5,390.4L1004.4,369.1L1005.3,391.9L1006.2,380.5L1007.1,386.1L1008.0,473.6L1008.9,398.1L1009.9,392.4L1010.8,425.0L1011.7,430.7L1012.6,400.2L1013.5,419.6L1014.4,475.3L1015.3,386.2L1016.2,360.7L1017.1,378.8L1018.0,378.1L1018.9,393.5L1019.9,362.0L1020.8,474.9L1021.7,395.0L1022.6,397.4L1023.5,360.9L1024.4,380.2L1025.3,409.0L1026.2,365.3L1027.1,471.7L1028.0,364.9L1029.0,365.3L1029.9,425.3L1030.8,386.1L1031.7,364.5L1032.6,405.2L1033.5,477.0L1034.4,370.2L1035.3,365.2L1036.2,369.5L1037.1,403.7L1038.1,404.7L1039.0,376.5L1039.9,479.0L1040.8,410.7L1041.7,395.7L1042.6,399.2L1043.5,430.1L1044.4,387.2L1045.3,395.3L1046.2,478.9L1047.1,380.4L1048.1,429.9L1049.0,404.7L1049.9,373.6L1050.8,393.1L1051.7,379.7L1052.6,477.3L1053.5,377.3L1054.4,358.0L1055.3,377.0L1056.2,391.6L1057.2,398.7L1058.1,358.5L1059.0,479.5L1059.9,373.9L1060.8,415.1L1061.7,497.0L1062.6,349.1L1063.5,348.1L1064.4,394.4L1065.3,471.4L1066.2,356.1L1067.2,364.0L1068.1,342.7L1069.0,366.4L1069.9,350.7L1070.8,373.0L1071.7,475.9L1072.6,341.1L1073.5,335.5L1074.4,395.7L1075.3,361.9L1076.3,331.8L1077.2,374.6L1078.1,474.1L1079.0,355.6L1079.9,355.8L1080.8,331.1L1081.7,409.2L1082.6,333.7L1083.5,401.7L1084.4,476.6L1085.4,372.7L1086.3,372.1L1087.2,418.9L1088.1,383.4L1089.0,324.1L1089.9,400.1L1090.8,479.5L1091.7,414.2L1092.6,345.4L1093.5,357.9L1094.4,388.6L1095.4,353.0L1096.3,305.6L1097.2,476.8L1098.1,371.9L1099.0,377.2L1099.9,361.9L1100.8,310.7L1101.7,309.0L1102.6,367.8L1103.5,475.0L1104.5,312.6L1105.4,313.1L1106.3,341.6L1107.2,314.3L1108.1,314.9L1109.0,394.7L1109.9,472.9L1110.8,405.8L1111.7,317.3L1112.6,324.1L1113.6,356.9L1114.5,319.0L1115.4,290.2L1116.3,474.7L1117.2,354.5L1118.1,331.3L1119.0,330.0L1119.9,332.0L1120.8,379.7L1121.7,357.8L1122.6,473.4L1123.6,356.4L1124.5,409.1L1125.4,337.6L1126.3,368.5L1127.2,387.7L1128.1,316.3L1129.0,476.5L1129.9,357.7L1130.8,352.5L1131.7,352.7L1132.7,374.7L1133.6,411.2L1134.5,406.7L1135.4,475.2L1136.3,414.3L1137.2,388.7L1138.1,401.0L1139.0,393.1L1139.9,362.9L1140.8,395.0L1141.8,473.4L1142.7,368.4L1143.6,368.8L1144.5,374.1L1145.4,383.0L1146.3,383.0L1147.2,410.5L1148.1,474.3L1149.0,377.9L1149.9,394.3L1150.8,386.0L1151.8,419.1L1152.7,385.6L1153.6,451.1L1154.5,477.9L1155.4,381.6L1156.3,464.4L1157.2,474.4L1158.1,497.0L1159.0,497.0L1159.9,497.0L1160.9,497.0L1161.8,497.0L1162.7,497.0L1163.6,497.0L1164.5,497.0L1165.4,497.0L1166.3,497.0L1167.2,497.0L1168.1,497.0L1169.0,497.0L1170.0,497.0L1170.9,497.0L1171.8,497.0L1172.7,497.0L1173.6,497.0L1174.5,497.0" fill="none" stroke="#82ca9d" stroke-width="1.9" stroke-linejoin="round" marker-start="url(#mp)" marker-mid="url(#mp)" marker-end="url(#mp)"/>
<text x="85" y="500.8" text-anchor="end" font-family="Liberation Sans" font-weight="bold" font-size="10.8" fill="#333">0</text>
<text x="85" y="422.9" text-anchor="end" font-family="Liberation Sans" font-weight="bold" font-size="10.8" fill="#333">2000</text>
<text x="85" y="345.1" text-anchor="end" font-family="Liberation Sans" font-weight="bold" font-size="10.8" fill="#333">4000</text>
<text x="85" y="267.2" text-anchor="end" font-family="Liberation Sans" font-weight="bold" font-size="10.8" fill="#333">6000</text>
<text x="85" y="193.1" text-anchor="end" font-family="Liberation Sans" font-weight="bold" font-size="10.8" fill="#333">8000</text>
<text x="130" y="510.5" text-anchor="middle" font-family="Liberation Sans" font-weight="bold" font-size="10.8" fill="#333">05/03/2022</text>
<text x="190" y="510.5" text-anchor="middle" font-family="Liberation Sans" font-weight="bold" font-size="10.8" fill="#333">10/05/2022</text>
<text x="250" y="510.5" text-anchor="middle" font-family="Liberation Sans" font-weight="bold" font-size="10.8" fill="#333">15/07/2022</text>
<text x="310" y="510.5" text-anchor="middle" font-family="Liberation Sans" font-weight="bold" font-size="10.8" fill="#333">19/09/2022</text>
<text x="370" y="510.5" text-anchor="middle" font-family="Liberation Sans" font-weight="bold" font-size="10.8" fill="#333">24/11/2022</text>
<text x="430" y="510.5" text-anchor="middle" font-family="Liberation Sans" font-weight="bold" font-size="10.8" fill="#333">29/01/2023</text>
<text x="490" y="510.5" text-anchor="middle" font-family="Liberation Sans" font-weight="bold" font-size="10.8" fill="#333">05/04/2023</text>
<text x="550" y="510.5" text-anchor="middle" font-family="Liberation Sans" font-weight="bold" font-size="10.8" fill="#333">10/06/2023</text>
<text x="610" y="510.5" text-anchor="middle" font-family="Liberation Sans" font-weight="bold" font-size="10.8" fill="#333">15/08/2023</text>
<text x="670" y="510.5" text-anchor="middle" font-family="Liberation Sans" font-weight="bold" font-size="10.8" fill="#333">20/10/2023</text>
<text x="730" y="510.5" text-anchor="middle" font-family="Liberation Sans" font-weight="bold" font-size="10.8" fill="#333">25/12/2023</text>
<text x="790" y="510.5" text-anchor="middle" font-family="Liberation Sans" font-weight="bold" font-size="10.8" fill="#333">29/02/2024</text>
<text x="850" y="510.5" text-anchor="middle" font-family="Liberation Sans" font-weight="bold" font-size="10.8" fill="#333">05/05/2024</text>
<text x="910" y="510.5" text-anchor="middle" font-family="Liberation Sans" font-weight="bold" font-size="10.8" fill="#333">10/07/2024</text>
<text x="970" y="510.5" text-anchor="middle" font-family="Liberation Sans" font-weight="bold" font-size="10.8" fill="#333">14/09/2024</text>
<text x="1030" y="510.5" text-anchor="middle" font-family="Liberation Sans" font-weight="bold" font-size="10.8" fill="#333">19/11/2024</text>
<text x="1090" y="510.5" text-anchor="middle" font-family="Liberation Sans" font-weight="bold" font-size="10.8" fill="#333">24/01/2025</text>
<text x="1177" y="510.5" text-anchor="end" font-family="Liberation Sans" font-weight="bold" font-size="10.8" fill="#333">27/04/2025</text>
<path d="M527.5,530.5H538.5" stroke="#8884d8" stroke-width="1.6"/><circle cx="533" cy="530.5" r="2" fill="#fff" stroke="#8884d8" stroke-width="1.4"/>
<text x="542.5" y="534.8" font-family="Liberation Sans" font-weight="bold" font-size="15.4" fill="#8884d8">Actual</text>
<path d="M597.5,530.5H608.5" stroke="#82ca9d" stroke-width="1.6"/><circle cx="603" cy="530.5" r="2" fill="#fff" stroke="#82ca9d" stroke-width="1.4"/>
<text x="612.7" y="534.8" font-family="Liberation Sans" font-weight="bold" font-size="15.4" fill="#82ca9d">Predicted</text>
</svg>
<div class="abs" style="left:24px;top:559px;width:1231px;height:1px;background:#e2e2e2;"></div>
<div class="abs" style="left:0;top:0;width:1266px;height:3px;background:#688868;"></div>
<div class="abs" style="left:0;top:0;width:8px;height:565px;background:#6b8a6b;"></div>
</div>
<div id="overlay"></div>
</body></html>
